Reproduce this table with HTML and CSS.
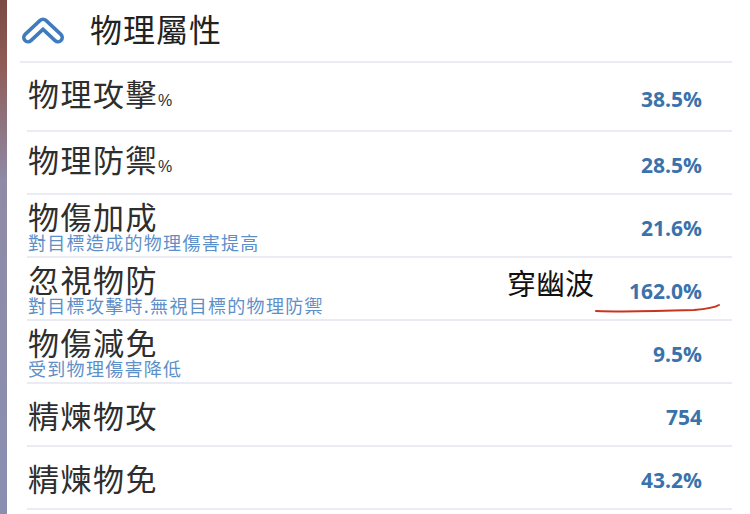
FILE: index.html
```html
<!DOCTYPE html>
<html lang="zh-Hant">
<head>
<meta charset="utf-8">
<title>物理屬性</title>
<link rel="stylesheet" href="styles.css">
</head>
<body>
<div class="page">
  <div class="edge"></div>
  <div class="panel">
    <div class="header">
      <svg class="chevron" width="46" height="30" viewBox="0 0 46 30">
        <path d="M8 22.5 L23 8.5 L38 22.5" fill="none" stroke="#3f7bbd" stroke-width="12" stroke-linecap="round" stroke-linejoin="round"/>
        <path d="M8 22.5 L23 8.5 L38 22.5" fill="none" stroke="#ffffff" stroke-width="5" stroke-linecap="round" stroke-linejoin="round"/>
      </svg>
      <div class="title">物理屬性</div>
    </div>
    <div class="list">
      <div class="row row-first">
        <div class="label-block"><div class="label">物理攻擊<span class="pct">%</span></div></div>
        <div class="value">38.5%</div>
      </div>
      <div class="row">
        <div class="label-block"><div class="label">物理防禦<span class="pct">%</span></div></div>
        <div class="value">28.5%</div>
      </div>
      <div class="row">
        <div class="label-block"><div class="label">物傷加成</div><div class="sub">對目標造成的物理傷害提高</div></div>
        <div class="value">21.6%</div>
      </div>
      <div class="row row-note">
        <div class="label-block"><div class="label">忽視物防</div><div class="sub">對目標攻擊時.無視目標的物理防禦</div></div>
        <div class="value">162.0%</div>
        <div class="note">穿幽波</div>
        <svg class="scribble" width="130" height="14" viewBox="0 0 130 14">
          <path d="M2 9 C30 10 70 9 100 8 C112 7 120 6 125 3" fill="none" stroke="#c9341f" stroke-width="2" stroke-linecap="round"/>
        </svg>
      </div>
      <div class="row">
        <div class="label-block"><div class="label">物傷減免</div><div class="sub">受到物理傷害降低</div></div>
        <div class="value">9.5%</div>
      </div>
      <div class="row">
        <div class="label-block"><div class="label">精煉物攻</div></div>
        <div class="value">754</div>
      </div>
      <div class="row">
        <div class="label-block"><div class="label">精煉物免</div></div>
        <div class="value">43.2%</div>
      </div>
    </div>
  </div>
</div>
</body>
</html>
```

FILE: styles.css
```css
html, body {
  margin: 0;
  padding: 0;
  background: #ffffff;
}
body {
  width: 750px;
  height: 514px;
  overflow: hidden;
  font-family: "Noto Sans CJK TC", "Noto Sans", sans-serif;
}
.page {
  display: flex;
  height: 514px;
}
.edge {
  width: 7px;
  flex: none;
  background: linear-gradient(180deg, #7a4a44 0%, #8e5a55 12%, #8f8aa6 35%, #8a8fb2 100%);
}
.panel {
  flex: none;
  width: 705px;
  margin-left: 20px;
}
.header {
  height: 61px;
  display: flex;
  align-items: center;
  border-bottom: 2px solid #ebebf3;
  margin-left: -7px;
}
.chevron {
  display: block;
  flex: none;
  margin-top: -1px;
}
.title {
  margin-left: 24px;
  font-size: 32px;
  letter-spacing: 1px;
  color: #222222;
  line-height: 34px;
  margin-top: -6px;
}
.row {
  position: relative;
  height: 61px;
  display: flex;
  align-items: center;
  border-bottom: 2px solid #ebebf3;
}
.row-first {
  height: 67px;
}
.label-block {
  display: flex;
  flex-direction: column;
  padding-left: 1px;
}
.label {
  font-size: 31px;
  line-height: 32px;
  letter-spacing: 1.5px;
  color: #2e2e2e;
}
.pct {
  font-family: "Liberation Sans", sans-serif;
  font-size: 16px;
  letter-spacing: 0;
  margin-left: 0;
}
.sub {
  font-size: 18px;
  line-height: 20px;
  letter-spacing: 1.3px;
  color: #5d8fc8;
}
.value {
  margin-left: auto;
  margin-right: 30px;
  padding-top: 4px;
  font-family: "Open Sans", "Liberation Sans", sans-serif;
  font-weight: 700;
  font-size: 21px;
  color: #3a72ac;
}
.note {
  position: absolute;
  left: 480px;
  top: 8px;
  font-size: 29px;
  line-height: 32px;
  color: #111111;
}
.scribble {
  position: absolute;
  left: 567px;
  top: 44px;
}
```
